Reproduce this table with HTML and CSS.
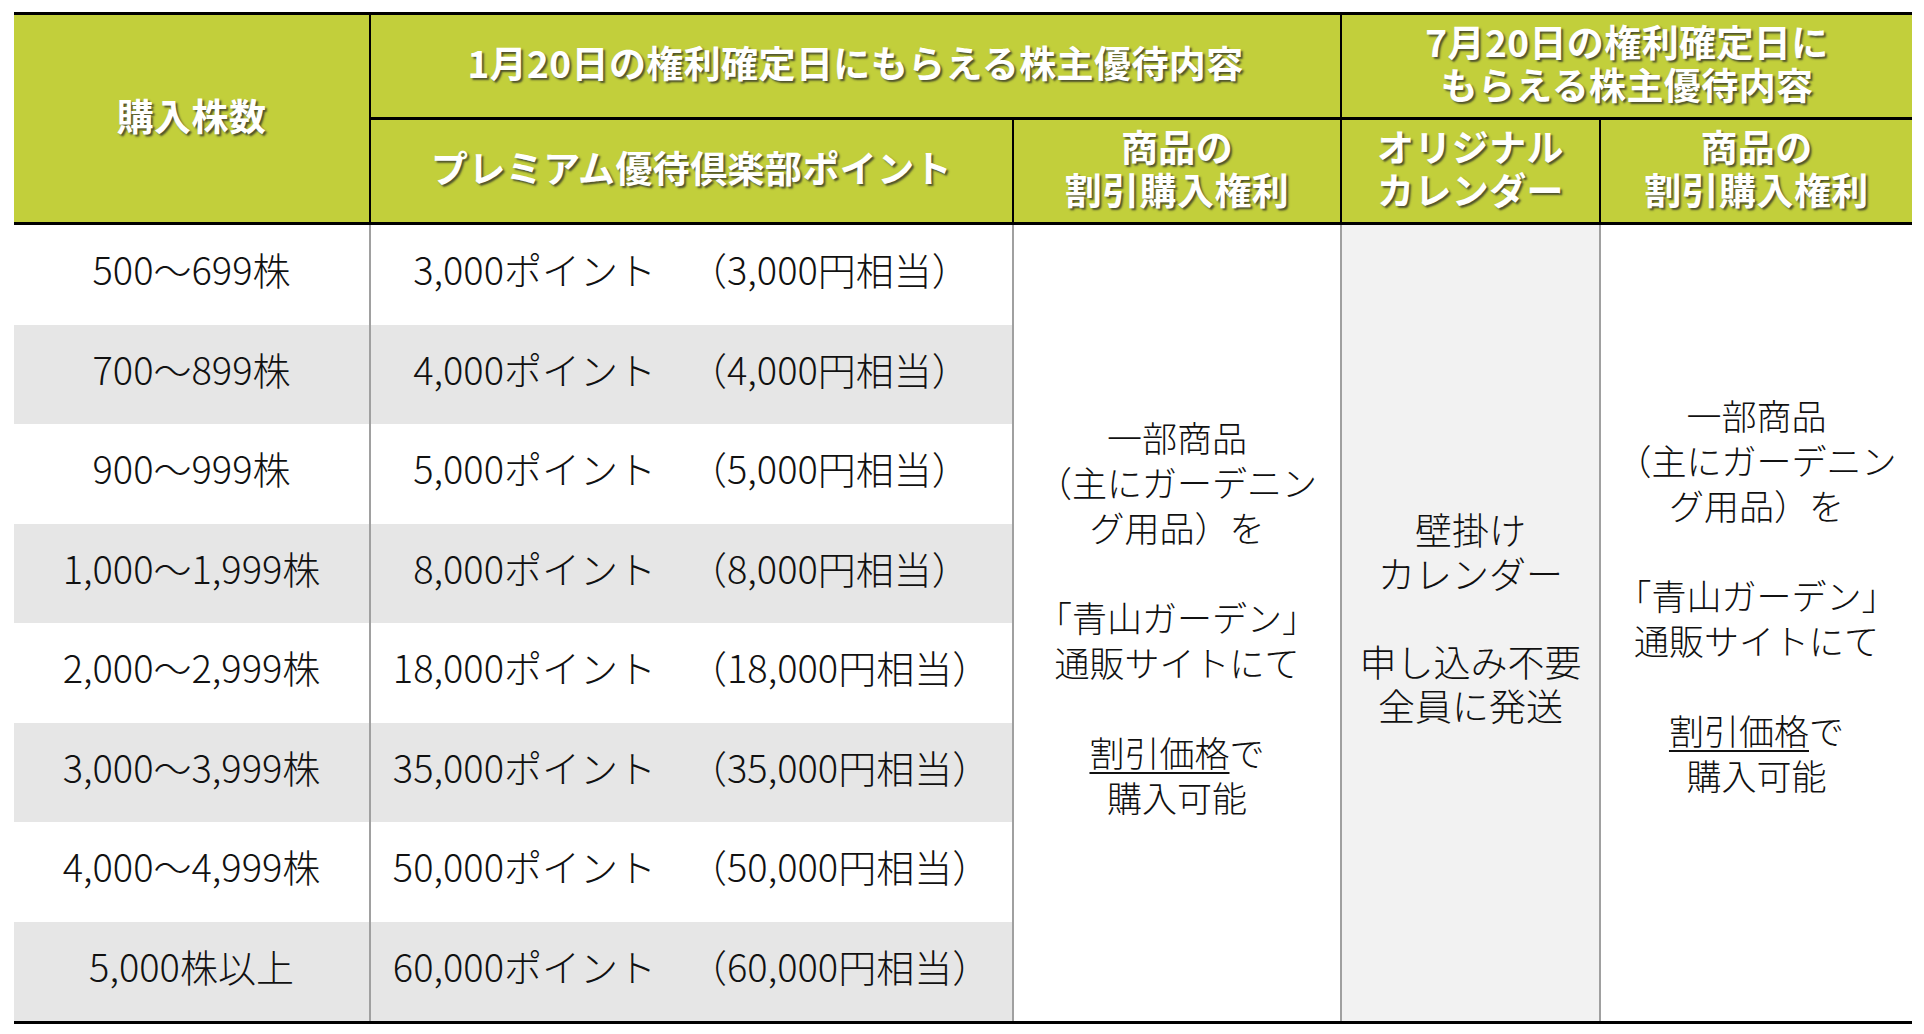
FILE: index.html
```html
<!DOCTYPE html>
<html lang="ja">
<head>
<meta charset="utf-8">
<title>株主優待内容</title>
<link rel="stylesheet" href="styles.css">
</head>
<body>
<div class="sheet">
  <div class="h h-shares">購入株数</div>
  <div class="h h-jan">1月20日の権利確定日にもらえる株主優待内容</div>
  <div class="h h-jul"><p class="txt">7月20日の権利確定日に<br>もらえる株主優待内容</p></div>
  <div class="h h-points">プレミアム優待倶楽部ポイント</div>
  <div class="h h-sub h-c3"><p class="txt">商品の<br>割引購入権利</p></div>
  <div class="h h-sub h-c4"><p class="txt">オリジナル<br>カレンダー</p></div>
  <div class="h h-sub h-c5"><p class="txt">商品の<br>割引購入権利</p></div>

  <div class="c c-shares">500～699株</div>
  <div class="c c-points"><span>3,000ポイント</span><span class="yen">（3,000円相当）</span></div>
  <div class="c c-shares alt">700～899株</div>
  <div class="c c-points alt"><span>4,000ポイント</span><span class="yen">（4,000円相当）</span></div>
  <div class="c c-shares">900～999株</div>
  <div class="c c-points"><span>5,000ポイント</span><span class="yen">（5,000円相当）</span></div>
  <div class="c c-shares alt">1,000～1,999株</div>
  <div class="c c-points alt"><span>8,000ポイント</span><span class="yen">（8,000円相当）</span></div>
  <div class="c c-shares">2,000～2,999株</div>
  <div class="c c-points"><span>18,000ポイント</span><span class="yen">（18,000円相当）</span></div>
  <div class="c c-shares alt">3,000～3,999株</div>
  <div class="c c-points alt"><span>35,000ポイント</span><span class="yen">（35,000円相当）</span></div>
  <div class="c c-shares">4,000～4,999株</div>
  <div class="c c-points"><span>50,000ポイント</span><span class="yen">（50,000円相当）</span></div>
  <div class="c c-shares alt">5,000株以上</div>
  <div class="c c-points alt"><span>60,000ポイント</span><span class="yen">（60,000円相当）</span></div>

  <div class="c tall t-c3"><p class="txt">一部商品<br>（主にガーデニン<br>グ用品）を<br><br>「青山ガーデン」<br>通販サイトにて<br><br><span class="u">割引価格</span>で<br>購入可能</p></div>
  <div class="c tall t-c4"><p class="txt">壁掛け<br>カレンダー<br><br>申し込み不要<br>全員に発送</p></div>
  <div class="c tall t-c5"><p class="txt">一部商品<br>（主にガーデニン<br>グ用品）を<br><br>「青山ガーデン」<br>通販サイトにて<br><br><span class="u">割引価格</span>で<br>購入可能<br><br></p></div>
</div>
</body>
</html>
```

FILE: styles.css
```css
* {
  box-sizing: border-box;
}

body {
  margin: 0;
  background: #ffffff;
  font-family: "Noto Sans CJK JP", "Noto Sans", sans-serif;
}

.txt {
  margin: 0;
}

.sheet {
  margin: 12px 0 0 14px;
  width: 1898px;
  display: grid;
  grid-template-columns: 355px 643px 328px 259px 313px;
  grid-template-rows: 105px 105px repeat(8, 99.5px);
  border-top: 3px solid #000;
  border-bottom: 3px solid #000;
}

/* header */
.h {
  display: flex;
  align-items: center;
  justify-content: center;
  text-align: center;
  background: #c2cf3b;
  border-bottom: 3px solid #000;
  padding-bottom: 7px;
  color: #ffffff;
  font-weight: 700;
  font-size: 37px;
  line-height: 43px;
  letter-spacing: 0.4px;
  text-shadow: 2px 2px 2px rgba(40, 40, 40, 0.75);
}

.h-shares {
  grid-column: 1;
  grid-row: 1 / 3;
}

.h-jan {
  grid-column: 2 / 4;
  grid-row: 1;
  border-left: 2px solid #000;
}

.h-jul {
  grid-column: 4 / 6;
  grid-row: 1;
  border-left: 2px solid #000;
}

.h-points {
  grid-column: 2;
  grid-row: 2;
  border-left: 2px solid #000;
}

.h-sub {
  grid-row: 2;
  border-left: 2px solid #000;
}

.h-c3 { grid-column: 3; }
.h-c4 { grid-column: 4; }
.h-c5 { grid-column: 5; }

/* body */
.c {
  display: flex;
  align-items: center;
  justify-content: center;
  text-align: center;
  color: #111;
  font-weight: 300;
  font-size: 38px;
  line-height: 44px;
  white-space: nowrap;
  padding-bottom: 11px;
}

.c-shares {
  grid-column: 1;
}

.c-points {
  grid-column: 2;
  border-left: 2px solid #a0a0a0;
}

.yen {
  margin-left: 33px;
}

.alt {
  background: #e6e6e6;
}

.tall {
  grid-row: 3 / 11;
  border-left: 2px solid #a0a0a0;
  padding-bottom: 13px;
}

.t-c3 {
  grid-column: 3;
  font-size: 35px;
  line-height: 45px;
}

.t-c4 {
  grid-column: 4;
  background: #f2f2f2;
  font-size: 37px;
}

.t-c5 {
  grid-column: 5;
  font-size: 35px;
  line-height: 45px;
}

.u {
  text-decoration: underline;
  text-decoration-thickness: 2px;
  text-underline-offset: 5px;
}
```
